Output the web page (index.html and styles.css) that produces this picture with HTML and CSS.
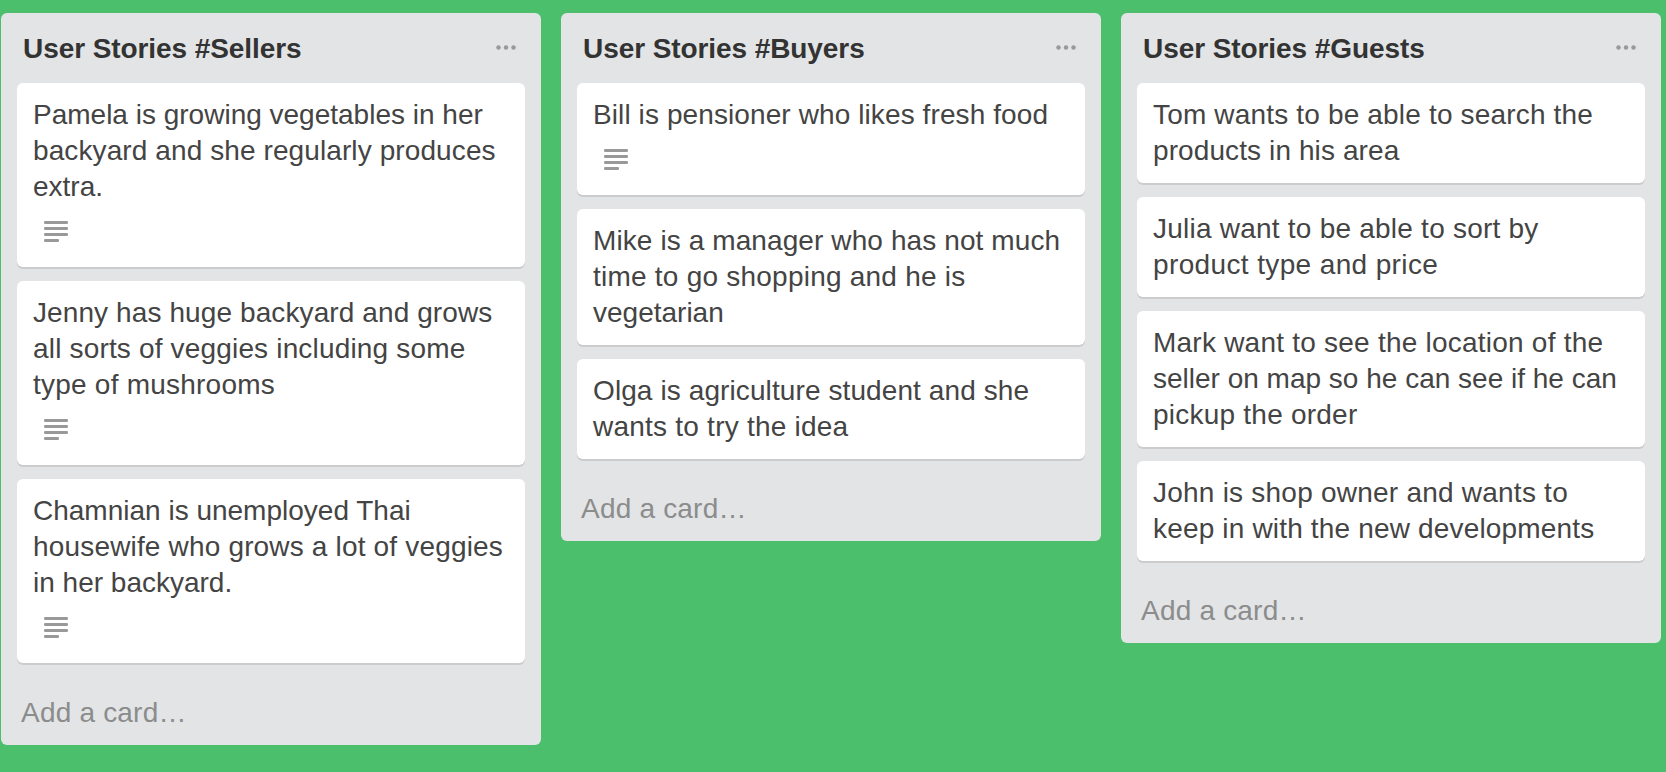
FILE: index.html
```html
<!DOCTYPE html>
<html lang="en">
<head>
<meta charset="utf-8">
<title>User Stories</title>
<link rel="stylesheet" href="styles.css">
</head>
<body>
<svg class="sprite" aria-hidden="true">
  <symbol id="desc" viewBox="0 0 24 21">
    <rect x="0" y="0" width="24" height="3" rx="1.2"/>
    <rect x="0" y="6" width="24" height="3" rx="1.2"/>
    <rect x="0" y="12" width="24" height="3" rx="1.2"/>
    <rect x="0" y="18" width="15" height="3" rx="1.2"/>
  </symbol>
  <symbol id="more" viewBox="0 0 20 5">
    <circle cx="2.5" cy="2.5" r="2.25"/>
    <circle cx="10" cy="2.5" r="2.25"/>
    <circle cx="17.5" cy="2.5" r="2.25"/>
  </symbol>
</svg>
<main class="board">
  <section class="list">
    <header class="list-header"><h2 class="list-title">User Stories #Sellers</h2><svg class="more"><use href="#more"/></svg></header>
    <div class="cards">
      <article class="card"><p class="card-title">Pamela is growing vegetables in her<br><span class="loose-1">backyard and she regularly produces</span><br>extra.</p><div class="badges"><svg class="desc"><use href="#desc"/></svg></div></article>
      <article class="card"><p class="card-title"><span class="loose-1">Jenny has huge backyard and grows</span><br><span class="loose-2">all sorts of veggies including some</span><br><span class="loose-3">type of mushrooms</span></p><div class="badges"><svg class="desc"><use href="#desc"/></svg></div></article>
      <article class="card"><p class="card-title">Chamnian is unemployed Thai<br><span class="loose-2">housewife who grows a lot of veggies</span><br>in her backyard.</p><div class="badges"><svg class="desc"><use href="#desc"/></svg></div></article>
    </div>
    <a class="add">Add a card…</a>
  </section>
  <section class="list">
    <header class="list-header"><h2 class="list-title">User Stories #Buyers</h2><svg class="more"><use href="#more"/></svg></header>
    <div class="cards">
      <article class="card"><p class="card-title"><span class="loose-1">Bill is pensioner who likes fresh food</span></p><div class="badges"><svg class="desc"><use href="#desc"/></svg></div></article>
      <article class="card"><p class="card-title"><span class="loose-1">Mike is a manager who has not much</span><br><span class="loose-3">time to go shopping and he is</span><br>vegetarian</p></article>
      <article class="card"><p class="card-title"><span class="loose-1">Olga is agriculture student and she</span><br><span class="loose-3">wants to try the idea</span></p></article>
    </div>
    <a class="add">Add a card…</a>
  </section>
  <section class="list">
    <header class="list-header"><h2 class="list-title">User Stories #Guests</h2><svg class="more"><use href="#more"/></svg></header>
    <div class="cards">
      <article class="card"><p class="card-title"><span class="loose-2">Tom wants to be able to search the</span><br><span class="loose-1">products in his area</span></p></article>
      <article class="card"><p class="card-title"><span class="loose-3">Julia want to be able to sort by</span><br><span class="loose-4">product type and price</span></p></article>
      <article class="card"><p class="card-title"><span class="loose-3">Mark want to see the location of the</span><br>seller on map so he can see if he can<br><span class="loose-3">pickup the order</span></p></article>
      <article class="card"><p class="card-title"><span class="loose-3">John is shop owner and wants to</span><br><span class="loose-2">keep in with the new developments</span></p></article>
    </div>
    <a class="add">Add a card…</a>
  </section>
</main>
</body>
</html>
```
FILE: styles.css
```css
* { box-sizing: border-box; }
body {
  margin: 0;
  height: 772px;
  overflow: hidden;
  background: #4bbf6b;
  color: #444;
  font: 28px/36px "Liberation Sans", Arial, sans-serif;
}
.sprite { display: none; }
.board {
  display: flex;
  align-items: flex-start;
  gap: 20px;
  padding: 13px 0 0 1px;
}
.list {
  flex: 0 0 540px;
  display: flex;
  flex-direction: column;
  padding: 0 16px;
  border-radius: 6px;
  background: #e2e4e6;
}
.list-header {
  display: flex;
  justify-content: space-between;
  height: 70px;
  padding: 18px 9px 0 6px;
}
.list-title {
  margin: 0;
  color: #333;
  font-size: 28px;
  font-weight: 700;
  line-height: 36px;
  letter-spacing: -0.08px;
  white-space: nowrap;
}
.more { width: 20px; height: 5px; margin-top: 14px; fill: #999; }
.cards { display: flex; flex-direction: column; gap: 14px; }
.card {
  padding: 14px 0 14px 16px;
  border-radius: 6px;
  background: #fff;
  box-shadow: 0 2px 0 #ccc;
}
.card-title { margin: 0; white-space: nowrap; }
.loose-1 { letter-spacing: 0.1px; }
.loose-2 { letter-spacing: 0.17px; }
.loose-3 { letter-spacing: 0.23px; }
.loose-4 { letter-spacing: 0.37px; }
.badges { height: 48px; padding: 16px 0 0 11px; }
.desc { display: block; width: 24px; height: 21px; fill: #999; }
.add {
  height: 82px;
  padding: 32px 0 0 4px;
  color: #8c8c8c;
  letter-spacing: 0.2px;
}
```
